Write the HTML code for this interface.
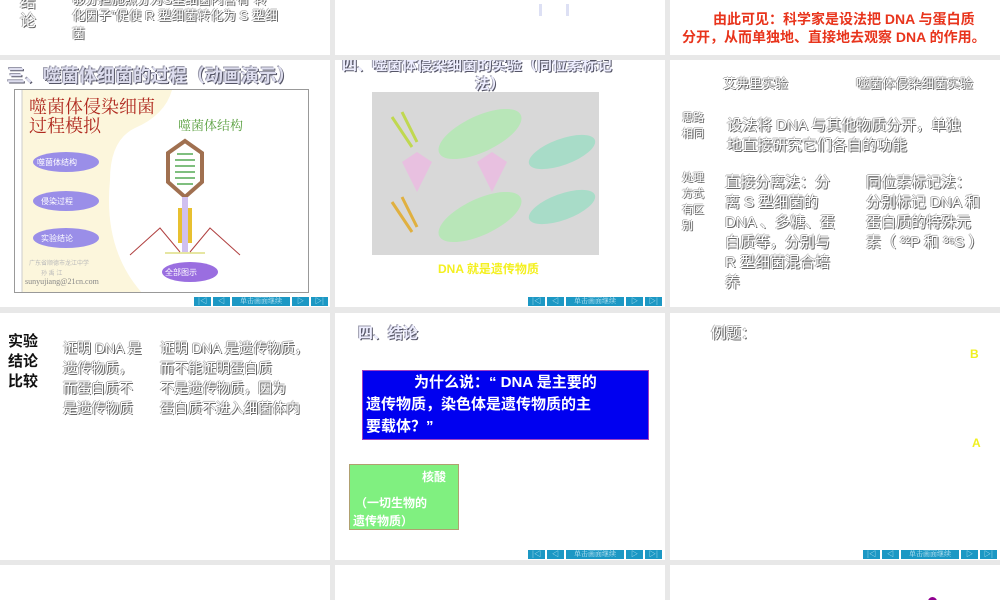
<!DOCTYPE html>
<html><head><meta charset="utf-8">
<style>
*{margin:0;padding:0;box-sizing:border-box}
body{width:1000px;height:600px;background:#e8e8e8;position:relative;overflow:hidden;font-family:"Liberation Sans","Noto Sans CJK SC",sans-serif}
.s{position:absolute;background:#fff;overflow:hidden}
.a{position:absolute;white-space:nowrap}
.em{color:#fff;text-shadow:1px 1px 0 #666,-1px 0 0 #aaa,0 -1px 0 #bbb}
.gt{color:#eef;text-shadow:1px 1px 0 #556,-1px -1px 0 #99a}
.nav{position:absolute;height:9px;display:flex;gap:2px}
.nav span{background:#1c98c4;color:#bfe6f4;font-size:7px;line-height:9px;text-align:center;display:block;font-family:"Noto Serif CJK SC",serif}
</style></head><body>

<!-- Row 1 -->
<div class="s" style="left:0;top:0;width:330px;height:55px">
  <div class="a em" style="left:20px;top:-12px;font-size:16px">结</div>
  <div class="a em" style="left:20px;top:7px;font-size:16px">论</div>
  <div class="a em" style="left:72px;top:-11px;font-size:13px">够分担施照分为S型细菌内含有“转</div>
  <div class="a em" style="left:72px;top:5px;font-size:13px">化因子”促使 R 型细菌转化为 S 型细</div>
  <div class="a em" style="left:72px;top:23px;font-size:13px">菌</div>
</div>
<div class="s" style="left:335px;top:0;width:330px;height:55px">
  <div class="a" style="left:204px;top:4px;width:3px;height:12px;background:#dde0f4"></div>
  <div class="a" style="left:231px;top:4px;width:3px;height:12px;background:#dde0f4"></div>
</div>
<div class="s" style="left:670px;top:0;width:330px;height:55px">
  <div class="a" style="left:43px;top:9px;font-size:14px;font-weight:bold;color:#e8341c">由此可见：科学家是设法把 DNA 与蛋白质</div>
  <div class="a" style="left:12px;top:27px;font-size:14px;font-weight:bold;color:#e8341c">分开，从而单独地、直接地去观察 DNA 的作用。</div>
</div>

<!-- Row 2 -->
<div class="s" style="left:0;top:60px;width:330px;height:247px">
  <div class="a gt" style="left:7px;top:2px;font-size:18px;font-weight:bold;color:#dde">三、噬菌体细菌的过程（动画演示）</div>
  <div class="a" style="left:14px;top:29px;width:295px;height:204px;border:1px solid #999;background:#fff;overflow:hidden">
    <svg width="295" height="204" style="position:absolute;left:0;top:0">
      <path d="M7 0 H157 Q150 25 120 38 Q95 50 95 90 Q88 160 128 204 H7 Z" fill="#fcf6dc"/>
      <line x1="7" y1="0" x2="7" y2="204" stroke="#ccc"/>
      <polygon points="170,51 187,63 187,92 170,107 153,92 153,63" fill="none" stroke="#a07050" stroke-width="4"/>
      <path d="M162 64 h16 M160 70 h20 M160 76 h20 M160 82 h20 M160 88 h20 M162 94 h16" stroke="#5a5" stroke-width="1.5"/>
      <rect x="167" y="107" width="6" height="55" fill="#d0c0f0"/>
      <rect x="163" y="118" width="4" height="35" fill="#e8c030"/>
      <rect x="173" y="118" width="4" height="35" fill="#e8c030"/>
      <path d="M165 162 L145 138 L115 165 M175 162 L195 138 L225 165" stroke="#b04040" fill="none"/>
      <path d="M150 163 h40" stroke="#cc4" />
      <ellipse cx="51" cy="72" rx="33" ry="10" fill="#9a8ee8"/>
      <ellipse cx="51" cy="111" rx="33" ry="10" fill="#9a8ee8"/>
      <ellipse cx="51" cy="148" rx="33" ry="10" fill="#9a8ee8"/>
      <ellipse cx="175" cy="182" rx="28" ry="10" fill="#9a6ee0"/>
    </svg>
    <div class="a" style="left:14px;top:7px;font-size:18px;line-height:19px;color:#b02a20;font-family:'Noto Serif CJK SC',serif">噬菌体侵染细菌<br>过程模拟</div>
    <div class="a" style="left:163px;top:25px;font-size:13px;color:#5aa040;font-family:'Noto Serif CJK SC',serif">噬菌体结构</div>
    <div class="a" style="left:22px;top:67px;font-size:8px;color:#fff">噬菌体结构</div>
    <div class="a" style="left:26px;top:106px;font-size:8px;color:#fff">侵染过程</div>
    <div class="a" style="left:26px;top:143px;font-size:8px;color:#fff">实验结论</div>
    <div class="a" style="left:150px;top:177px;font-size:8px;color:#fff">全部图示</div>
    <div class="a" style="left:14px;top:168px;font-size:6px;color:#bbb">广东省顺德市龙江中学</div>
    <div class="a" style="left:26px;top:178px;font-size:6px;color:#bbb">孙 禹 江</div>
    <div class="a" style="left:10px;top:187px;font-size:8px;color:#888;font-family:'Liberation Serif',serif">sunyujiang@21cn.com</div>
  </div>
  <div class="nav" style="left:194px;top:237px"><span style="width:17px">|◁</span><span style="width:17px">◁</span><span style="width:58px">单击画面继续</span><span style="width:17px">▷</span><span style="width:17px">▷|</span></div>
</div>
<div class="s" style="left:335px;top:60px;width:330px;height:247px">
  <div class="a gt" style="left:7px;top:-6px;font-size:15px;font-weight:bold">四、噬菌体侵染细菌的实验（同位素标记</div>
  <div class="a gt" style="left:140px;top:13px;font-size:15px;font-weight:bold">法）</div>
  <div class="a" style="left:37px;top:32px;width:227px;height:163px;background:#d8d8d8;overflow:hidden">
    <svg width="227" height="163">
      <ellipse cx="108" cy="42" rx="45" ry="18" fill="#b8e6b8" transform="rotate(-25 108 42)"/>
      <ellipse cx="190" cy="60" rx="35" ry="13" fill="#a8dcc8" transform="rotate(-20 190 60)"/>
      <ellipse cx="108" cy="125" rx="45" ry="18" fill="#b8e6b8" transform="rotate(-25 108 125)"/>
      <ellipse cx="190" cy="115" rx="35" ry="13" fill="#a8dcc8" transform="rotate(-20 190 115)"/>
      <path d="M20 25 L40 55 M30 20 L45 50" stroke="#c0d850" stroke-width="3"/>
      <path d="M20 110 L40 140 M30 105 L45 135" stroke="#e0b040" stroke-width="3"/>
      <polygon points="30,70 45,60 60,70 45,100" fill="#e8c0e0"/>
      <polygon points="105,70 120,60 135,70 120,100" fill="#e8c0e0"/>
    </svg>
  </div>
  <div class="a" style="left:103px;top:200px;font-size:12px;font-weight:bold;color:#f4f020">DNA 就是遗传物质</div>
  <div class="nav" style="left:193px;top:237px"><span style="width:17px">|◁</span><span style="width:17px">◁</span><span style="width:58px">单击画面继续</span><span style="width:17px">▷</span><span style="width:17px">▷|</span></div>
</div>
<div class="s" style="left:670px;top:60px;width:330px;height:247px">
  <div class="a em" style="left:53px;top:13px;font-size:13px">艾弗里实验</div>
  <div class="a em" style="left:186px;top:13px;font-size:13px">噬菌体侵染细菌实验</div>
  <div class="a em" style="left:12px;top:50px;font-size:11px;line-height:16px">思路<br>相同</div>
  <div class="a em" style="left:57px;top:56px;font-size:15px;line-height:20px">设法将 DNA 与其他物质分开，单独<br>地直接研究它们各自的功能</div>
  <div class="a em" style="left:12px;top:110px;font-size:11px;line-height:16px">处理<br>方式<br>有区<br>别</div>
  <div class="a em" style="left:55px;top:113px;font-size:15px;line-height:20px">直接分离法：分<br>离 S 型细菌的<br>DNA 、多糖、蛋<br>白质等，分别与<br>R 型细菌混合培<br>养</div>
  <div class="a em" style="left:196px;top:113px;font-size:15px;line-height:20px">同位素标记法：<br>分别标记 DNA 和<br>蛋白质的特殊元<br>素（ ³²P 和 ³⁵S ）</div>
</div>

<!-- Row 3 -->
<div class="s" style="left:0;top:313px;width:330px;height:247px">
  <div class="a" style="left:8px;top:19px;font-size:15px;line-height:20px;font-weight:bold;color:#111">实验<br>结论<br>比较</div>
  <div class="a em" style="left:63px;top:25px;font-size:14px;line-height:20px">证明 DNA 是<br>遗传物质，<br>而蛋白质不<br>是遗传物质</div>
  <div class="a em" style="left:160px;top:25px;font-size:14px;line-height:20px">证明 DNA 是遗传物质，<br>而不能证明蛋白质<br>不是遗传物质，因为<br>蛋白质不进入细菌体内</div>
</div>
<div class="s" style="left:335px;top:313px;width:330px;height:247px">
  <div class="a gt" style="left:23px;top:9px;font-size:15px;font-weight:bold">四、结论</div>
  <div class="a" style="left:27px;top:57px;width:287px;height:70px;background:#0000f0;border:1px solid #a040c0;color:#fff;font-weight:bold;font-size:15px;line-height:22px;padding:1px 3px;white-space:normal">
    <div style="padding-left:48px">为什么说：“ DNA 是主要的</div>
    <div>遗传物质，染色体是遗传物质的主</div>
    <div>要载体？”</div>
  </div>
  <div class="a" style="left:14px;top:151px;width:110px;height:66px;background:#80f080;border:1px solid #b0a070;color:#fff;font-weight:bold;font-size:12px">
    <div class="a" style="left:72px;top:3px">核酸</div>
    <div class="a" style="left:5px;top:29px">（一切生物的</div>
    <div class="a" style="left:3px;top:47px">遗传物质）</div>
  </div>
  <div class="nav" style="left:193px;top:237px"><span style="width:17px">|◁</span><span style="width:17px">◁</span><span style="width:58px">单击画面继续</span><span style="width:17px">▷</span><span style="width:17px">▷|</span></div>
</div>
<div class="s" style="left:670px;top:313px;width:330px;height:247px">
  <div class="a em" style="left:41px;top:9px;font-size:15px">例题：</div>
  <div class="a" style="left:300px;top:34px;font-size:12px;font-weight:bold;color:#f0f020">B</div>
  <div class="a" style="left:302px;top:123px;font-size:12px;font-weight:bold;color:#f0f020">A</div>
  <div class="nav" style="left:193px;top:237px"><span style="width:17px">|◁</span><span style="width:17px">◁</span><span style="width:58px">单击画面继续</span><span style="width:17px">▷</span><span style="width:17px">▷|</span></div>
</div>

<!-- Row 4 -->
<div class="s" style="left:0;top:565px;width:330px;height:35px"></div>
<div class="s" style="left:335px;top:565px;width:330px;height:35px"></div>
<div class="s" style="left:670px;top:565px;width:330px;height:35px">
  <div class="a" style="left:258px;top:32px;width:9px;height:9px;border-radius:50%;background:#900090"></div>
</div>
</body></html>
